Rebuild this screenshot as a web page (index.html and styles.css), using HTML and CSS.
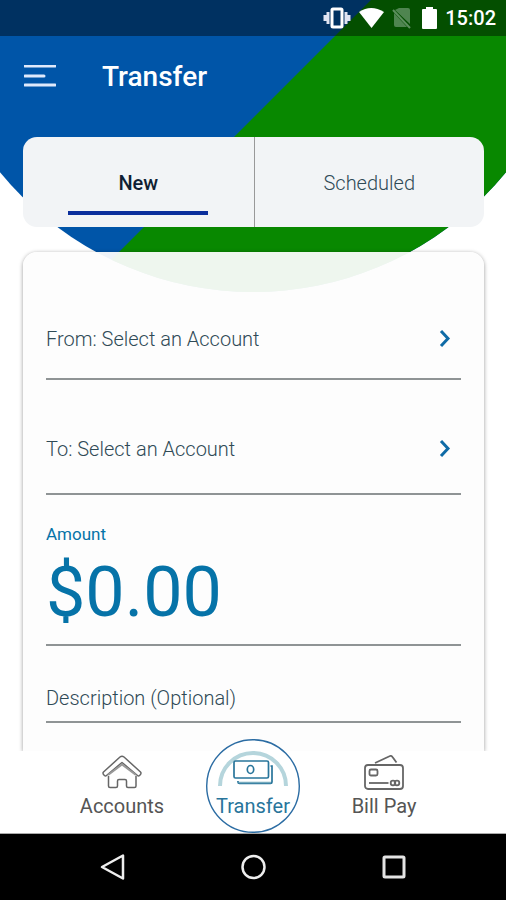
FILE: index.html
```html
<!DOCTYPE html>
<html lang="en">
<head>
<meta charset="utf-8">
<meta name="viewport" content="width=device-width, initial-scale=1">
<title>Transfer</title>
<link rel="stylesheet" href="styles.css">
</head>
<body>
<div class="app">
  <svg class="backdrop" viewBox="0 0 506 292" aria-hidden="true">
    <defs><clipPath id="disc"><circle cx="253" cy="-35" r="327"/></clipPath></defs>
    <g clip-path="url(#disc)">
      <rect width="506" height="292" fill="#0055a8"/>
      <path d="M371 0H506V292H79Z" fill="#088800"/>
    </g>
  </svg>

  <div class="status">
    <svg width="28" height="22" viewBox="0 0 28 22" aria-hidden="true"><rect x="9" y="2" width="10" height="18" rx="1" fill="none" stroke="#fff" stroke-width="3"/><path d="M5 5V17M23 5V17M2 8V14M26 8V14" stroke="#dfe4f2" stroke-width="3"/></svg>
    <svg width="25" height="22" viewBox="0 0 25 22" aria-hidden="true"><path d="M0 5Q12 -3 25 5L12.500 21Z" fill="#fff"/></svg>
    <svg width="22" height="22" viewBox="0 0 22 22" aria-hidden="true"><path d="M7 1H16Q18 1 18 3V17L3 3ZM2 6L15 20H4Q2 20 2 18Z" fill="#4f8550"/><path d="M1 3L18 21" stroke="#5d8f5e" stroke-width="2"/></svg>
    <svg width="15" height="22" viewBox="0 0 15 22" aria-hidden="true"><path d="M4 0H11V2H14Q15 2 15 3V21Q15 22 14 22H1Q0 22 0 21V3Q0 2 1 2H4Z" fill="#fff"/></svg>
    <time>15:02</time>
  </div>

  <header class="header">
    <button class="menu" type="button" aria-label="Menu">
      <svg width="32" height="24" viewBox="0 0 32 24"><path d="M1 1H31M1 11H20M1 20H31" stroke="#dfe9fb" stroke-width="3" stroke-linecap="round"/></svg>
    </button>
    <h1>Transfer</h1>
  </header>

  <main>
    <div class="tabs" role="tablist">
      <button class="tab tab-active" type="button" role="tab" aria-selected="true">New</button>
      <button class="tab" type="button" role="tab" aria-selected="false">Scheduled</button>
    </div>
    <form class="card">
      <button class="row row-from" type="button"><span>From: Select an Account</span>
        <svg width="12" height="18" viewBox="0 0 12 18" aria-hidden="true"><path d="M2 1L9 8.500L2 16" fill="none" stroke="#0f6ba6" stroke-width="3"/></svg>
      </button>
      <button class="row row-to" type="button"><span>To: Select an Account</span>
        <svg width="12" height="18" viewBox="0 0 12 18" aria-hidden="true"><path d="M2 1L9 8.500L2 16" fill="none" stroke="#0f6ba6" stroke-width="3"/></svg>
      </button>
      <div class="amount">
        <label for="amount">Amount</label>
        <input id="amount" type="text" inputmode="decimal" value="$0.00">
      </div>
      <div class="description">
        <input id="description" type="text" placeholder="Description (Optional)" aria-label="Description (Optional)">
      </div>
    </form>
  </main>

  <nav class="nav">
    <a class="nav-item" href="#accounts">
      <svg width="40" height="36" viewBox="0 0 40 36" fill="none" stroke="#666" stroke-width="1.500" stroke-linejoin="round" aria-hidden="true">
        <path d="M18 2Q20 0.500 22 2L38.500 17Q39.500 18 38.500 19.500L37.500 20.500Q36.500 21.500 35.500 20.500L20 7.500L4.500 20.500Q3.500 21.500 2.500 20.500L1.500 19.500Q0.500 18 1.500 17Z"/>
        <path d="M6 20L20 9.500L34 20" stroke="#999" stroke-width="2"/>
        <path d="M6.500 21V31Q6.500 32.500 8 32.500H14Q15.500 32.500 15.500 31V26Q15.500 24.500 17 24.500H23Q24.500 24.500 24.500 26V31Q24.500 32.500 26 32.500H32.500Q34 32.500 34 31V21"/>
      </svg>
      <span>Accounts</span>
    </a>
    <a class="nav-item nav-current" href="#transfer" aria-current="page">
      <svg class="ring" width="94" height="94" viewBox="0 0 94 94" fill="none" aria-hidden="true">
        <circle cx="47" cy="47" r="46.300" fill="#fff" stroke="#2b6ca3" stroke-width="1.400"/>
        <path d="M14 47A33 33 0 0 1 80 47" stroke="#b5d5dc" stroke-width="4"/>
      </svg>
      <svg class="glyph" width="40" height="36" viewBox="0 0 40 36" fill="none" stroke="#28759b" stroke-width="1.700" aria-hidden="true">
        <rect x="1" y="6" width="34.500" height="17" rx="1.500" fill="#fff" fill-opacity=".35"/>
        <ellipse cx="17.500" cy="14.500" rx="3.200" ry="4"/>
        <path d="M5 26V27Q5 28.500 6.500 28.500H37.500Q39 28.500 39 27V11H37.500"/>
        <path d="M5.500 27.500H38" stroke="#76aabd"/>
      </svg>
      <span>Transfer</span>
    </a>
    <a class="nav-item" href="#billpay">
      <svg width="40" height="36" viewBox="0 0 40 36" fill="none" stroke="#666" stroke-width="1.800" aria-hidden="true">
        <rect x="1" y="10" width="38" height="24" rx="3"/>
        <rect x="5.500" y="14.500" width="8" height="6" rx="1.500"/>
        <path d="M5 28H24.500"/>
        <ellipse cx="29" cy="28" rx="2.300" ry="2.300"/>
        <ellipse cx="33" cy="28" rx="2.300" ry="2.300"/>
        <path d="M11 8L26 1Q27.500 0.500 28.500 2L32.500 7.500"/>
      </svg>
      <span>Bill Pay</span>
    </a>
  </nav>

  <div class="system">
    <button type="button" aria-label="Back"><svg width="28" height="28" viewBox="0 0 28 28"><path d="M3 14L24 2.500V25.500Z" fill="none" stroke="#eee" stroke-width="2.500" stroke-linejoin="round"/></svg></button>
    <button type="button" aria-label="Home"><svg width="28" height="28" viewBox="0 0 28 28"><circle cx="14.500" cy="14" r="11" fill="none" stroke="#eee" stroke-width="2.500"/></svg></button>
    <button type="button" aria-label="Recent apps"><svg width="28" height="28" viewBox="0 0 28 28"><rect x="5" y="4" width="20" height="20" rx="1" fill="none" stroke="#e4e4e4" stroke-width="3"/></svg></button>
  </div>
</div>
</body>
</html>
```
FILE: styles.css
```css
* { box-sizing: border-box; }

body {
  margin: 0;
  background: #fff;
  font-family: Roboto, "Liberation Sans", sans-serif;
  font-size: 20px;
  line-height: 24px;
  color: #2f4a56;
}

button, input {
  margin: 0;
  padding: 0;
  border: 0;
  background: none;
  color: inherit;
  font: inherit;
}

svg { display: block; }

.app {
  position: relative;
  display: flex;
  flex-direction: column;
  min-height: 100vh;
}

.backdrop {
  position: absolute;
  top: 0;
  left: 0;
  width: 100%;
}

.status, .header, main, .nav, .system { position: relative; }

.status {
  display: flex;
  align-items: center;
  justify-content: flex-end;
  gap: 8px;
  height: 36px;
  padding: 0 10px;
  background: rgba(0, 0, 0, 0.42);
  color: #fff;
  font-weight: 500;
}

.header {
  display: flex;
  align-items: center;
  gap: 46px;
  height: 81px;
  padding: 0 24px;
}

.header h1 {
  margin: 0;
  color: #fff;
  font-size: 28px;
  line-height: 32px;
  font-weight: 500;
}

main {
  flex: 1;
  display: flex;
  flex-direction: column;
  gap: 25px;
  padding: 20px 22px 0 23px;
  overflow: hidden;
}

.tabs {
  display: grid;
  grid-template-columns: 1fr 1fr;
  height: 90px;
  border-radius: 14px;
  background: #f2f4f6;
}

.tab {
  position: relative;
  font-weight: 300;
  padding-top: 2px;
}

.tab + .tab { border-left: 1px solid #999; }

.tab-active {
  color: #0f1f33;
  font-weight: 500;
}

.tab-active::after {
  content: "";
  position: absolute;
  bottom: 12px;
  left: 50%;
  width: 140px;
  height: 4px;
  margin-left: -70px;
  background: #0b2f9c;
}

.card {
  flex: 1;
  padding: 0 23px 28px;
  border-radius: 14px 14px 0 0;
  background: rgba(253, 253, 253, 0.94);
  box-shadow: 0 1px 4px rgba(0, 0, 0, 0.4);
}

.row {
  display: flex;
  align-items: center;
  justify-content: space-between;
  width: 100%;
  padding-right: 10px;
  border-bottom: 2px solid #8f9495;
  font-weight: 300;
  text-align: left;
}

.row-from { padding-top: 75px; padding-bottom: 27px; }
.row-to { padding-top: 57px; padding-bottom: 32px; }

.amount {
  padding: 29px 0 16px;
  border-bottom: 2px solid #8f9495;
  color: #0673a8;
}

.amount label {
  display: block;
  margin-bottom: 12px;
  font-size: 17px;
  line-height: 20px;
}

.amount input {
  display: block;
  width: 100%;
  height: 72px;
  font-size: 70px;
  line-height: 72px;
}

.description {
  padding: 40px 0 11px;
  border-bottom: 2px solid #8f9495;
}

.description input {
  display: block;
  width: 100%;
  height: 24px;
  font-weight: 300;
}

.description input::placeholder { color: #2f4a56; opacity: 1; }

.nav {
  display: grid;
  grid-template-columns: repeat(3, 131px);
  justify-content: center;
  height: 83px;
  border-bottom: 1px solid #aaa;
  background: #fff;
}

.nav-item {
  position: relative;
  display: flex;
  flex-direction: column;
  align-items: center;
  gap: 3px;
  padding-top: 4px;
  color: #555;
  text-decoration: none;
}

.nav-current { color: #28759b; }

.nav-item span, .glyph { position: relative; }

.ring {
  position: absolute;
  top: -12px;
  left: 50%;
  margin-left: -47px;
}

.system {
  display: grid;
  grid-template-columns: repeat(3, 140px);
  justify-content: center;
  justify-items: center;
  align-items: center;
  height: 66px;
  background: #000;
}
```
